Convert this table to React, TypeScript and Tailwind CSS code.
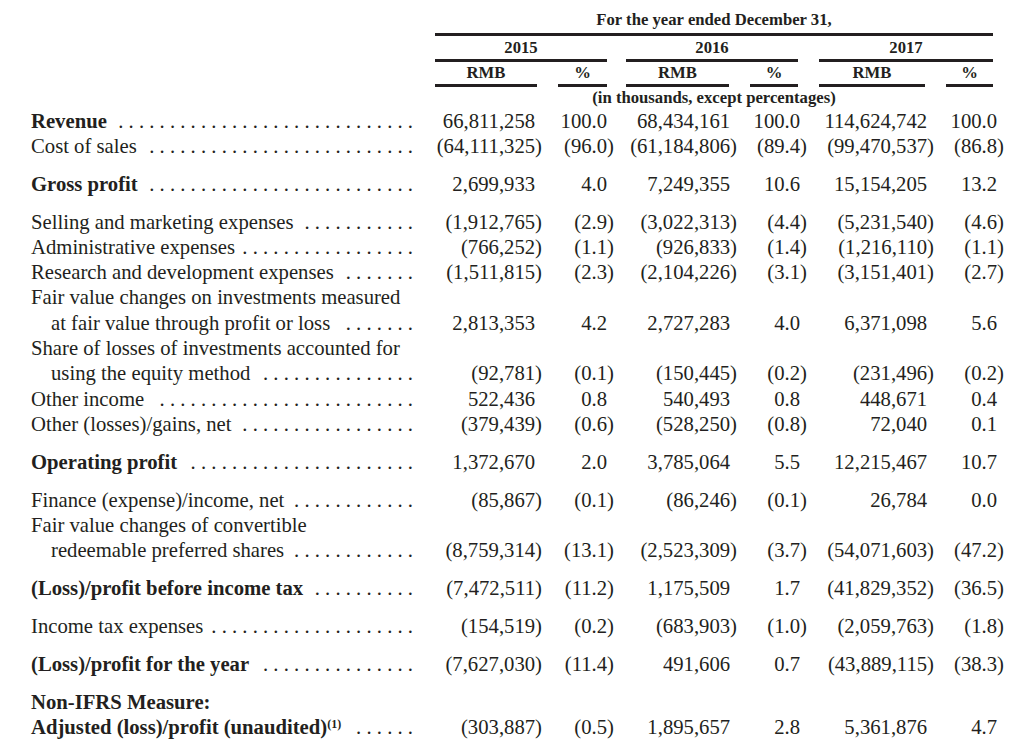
import { useLayoutEffect, useRef, useState } from "react";

const cols = "grid grid-cols-[389px_122px_72px_123px_70px_127px_70px]";
const ink = "bg-[#231f20]";

type Row = {
  label: React.ReactNode;
  vals?: string[];
  bold?: boolean;
  indent?: boolean;
  gap?: boolean;
};

const rows: Row[] = [
  { label: "Revenue", bold: true, vals: ["66,811,258", "100.0", "68,434,161", "100.0", "114,624,742", "100.0"] },
  { label: "Cost of sales", vals: ["(64,111,325)", "(96.0)", "(61,184,806)", "(89.4)", "(99,470,537)", "(86.8)"] },
  { label: "Gross profit", bold: true, gap: true, vals: ["2,699,933", "4.0", "7,249,355", "10.6", "15,154,205", "13.2"] },
  { label: "Selling and marketing expenses", gap: true, vals: ["(1,912,765)", "(2.9)", "(3,022,313)", "(4.4)", "(5,231,540)", "(4.6)"] },
  { label: "Administrative expenses", vals: ["(766,252)", "(1.1)", "(926,833)", "(1.4)", "(1,216,110)", "(1.1)"] },
  { label: "Research and development expenses", vals: ["(1,511,815)", "(2.3)", "(2,104,226)", "(3.1)", "(3,151,401)", "(2.7)"] },
  { label: "Fair value changes on investments measured" },
  { label: "at fair value through profit or loss", indent: true, vals: ["2,813,353", "4.2", "2,727,283", "4.0", "6,371,098", "5.6"] },
  { label: "Share of losses of investments accounted for" },
  { label: "using the equity method", indent: true, vals: ["(92,781)", "(0.1)", "(150,445)", "(0.2)", "(231,496)", "(0.2)"] },
  { label: "Other income", vals: ["522,436", "0.8", "540,493", "0.8", "448,671", "0.4"] },
  { label: "Other (losses)/gains, net", vals: ["(379,439)", "(0.6)", "(528,250)", "(0.8)", "72,040", "0.1"] },
  { label: "Operating profit", bold: true, gap: true, vals: ["1,372,670", "2.0", "3,785,064", "5.5", "12,215,467", "10.7"] },
  { label: "Finance (expense)/income, net", gap: true, vals: ["(85,867)", "(0.1)", "(86,246)", "(0.1)", "26,784", "0.0"] },
  { label: "Fair value changes of convertible" },
  { label: "redeemable preferred shares", indent: true, vals: ["(8,759,314)", "(13.1)", "(2,523,309)", "(3.7)", "(54,071,603)", "(47.2)"] },
  { label: "(Loss)/profit before income tax", bold: true, gap: true, vals: ["(7,472,511)", "(11.2)", "1,175,509", "1.7", "(41,829,352)", "(36.5)"] },
  { label: "Income tax expenses", gap: true, vals: ["(154,519)", "(0.2)", "(683,903)", "(1.0)", "(2,059,763)", "(1.8)"] },
  { label: "(Loss)/profit for the year", bold: true, gap: true, vals: ["(7,627,030)", "(11.4)", "491,606", "0.7", "(43,889,115)", "(38.3)"] },
  { label: "Non-IFRS Measure:", bold: true, gap: true },
  {
    label: (
      <>
        Adjusted (loss)/profit (unaudited)
        <span className="relative -top-[6px] text-[12px]">(1)</span>
      </>
    ),
    bold: true,
    vals: ["(303,887)", "(0.5)", "1,895,657", "2.8", "5,361,876", "4.7"],
  },
];

// per-column rule margins (header underlines)
const rule = [
  "ml-[15px] mr-[5px]",
  "ml-[16px] mr-[7px]",
  "ml-[12px] mr-[8px]",
  "ml-[13px] mr-[9px]",
  "ml-[12px] mr-[9px]",
  "ml-[12px] mr-[11px]",
];

// dot leader: as many ". " units as fit, ending flush right
function Leader() {
  const ref = useRef<HTMLDivElement>(null);
  const [n, setN] = useState(0);
  useLayoutEffect(() => {
    const el = ref.current;
    if (!el) return;
    const ctx = document.createElement("canvas").getContext("2d");
    if (!ctx) return;
    ctx.font = getComputedStyle(el).font;
    const unit = ctx.measureText(". ").width;
    const space = ctx.measureText(" ").width;
    setN(Math.max(0, Math.floor((el.clientWidth + space - 0.5) / unit)));
  }, []);
  return (
    <div ref={ref} className="ml-[6px] min-w-0 flex-1 whitespace-nowrap text-right font-normal">
      {Array(n).fill(".").join(" ")}
    </div>
  );
}

function Num({ v }: { v: string }) {
  return (
    <div className="text-right whitespace-nowrap">
      {v.startsWith("(") ? v : (
        <>
          {v}
          <span className="invisible">)</span>
        </>
      )}
    </div>
  );
}

export default function App() {
  return (
    <div className="w-[1024px] h-[749px] overflow-hidden bg-white pl-[31px] text-[#231f20] font-['Liberation_Serif',serif]">
      {/* column headings */}
      <div className="text-[16.7px] font-bold">
        <div className={cols}>
          <div />
          <div className="col-span-6 ml-[15px] mr-[11px]">
            <div className="h-[33px] flex items-end justify-center pb-[3px] leading-[20px]">
              For the year ended December 31,
            </div>
            <div className={`h-[3px] ${ink}`} />
          </div>
        </div>
        <div className={cols}>
          <div />
          {[
            ["2015", "ml-[15px] mr-[7px]"],
            ["2016", "ml-[12px] mr-[9px]"],
            ["2017", "ml-[12px] mr-[11px]"],
          ].map(([y, m]) => (
            <div key={y} className={`col-span-2 ${m}`}>
              <div className="h-[23px] leading-[23px] text-center">{y}</div>
              <div className={`h-[3px] ${ink}`} />
            </div>
          ))}
        </div>
        <div className={cols}>
          <div />
          {["RMB", "%", "RMB", "%", "RMB", "%"].map((h, i) => (
            <div key={i} className={rule[i]}>
              <div className="h-[22px] leading-[22px] text-center">{h}</div>
              <div className={`h-[3px] ${ink}`} />
            </div>
          ))}
        </div>
        <div className={cols}>
          <div />
          <div className="col-span-6 ml-[15px] mr-[11px] h-[21.5px] leading-[21.5px] text-center">
            (in thousands, except percentages)
          </div>
        </div>
      </div>

      {/* statement rows */}
      <div className="text-[20.7px] leading-[25.3px]">
        {rows.map((r, i) => (
          <div key={i} className={`${cols} ${r.gap ? "mt-[12.6px]" : ""}`}>
            <div className={`flex pr-[7px] ${r.bold ? "font-bold" : ""} ${r.indent ? "pl-[20px]" : ""}`}>
              <span className="shrink-0 whitespace-nowrap">{r.label}</span>
              {r.vals && <Leader />}
            </div>
            {r.vals ? r.vals.map((v, j) => <Num key={j} v={v} />) : null}
          </div>
        ))}
      </div>
    </div>
  );
}
